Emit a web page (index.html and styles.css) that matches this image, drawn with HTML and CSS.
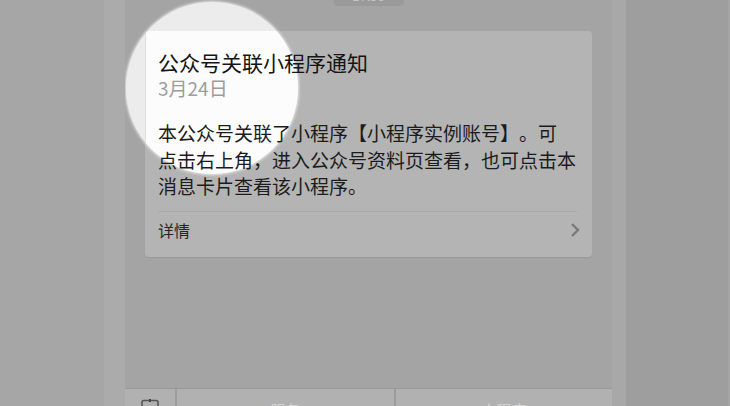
FILE: index.html
```html
<!DOCTYPE html>
<html lang="zh-CN">
<head>
<meta charset="utf-8">
<title>公众号关联小程序通知</title>
<link rel="stylesheet" href="styles.css">
</head>
<body>
<div class="page">
  <div class="gutter-left"></div>
  <div class="strip-left"></div>
  <div class="screen">
    <div class="chat">
      <div class="time"><span class="time-pill">17:58</span></div>
      <div class="card">
        <div class="lens"><div class="lens-card"></div></div>
        <div class="card-body">
          <div class="title">公众号关联小程序通知</div>
          <div class="date">3月24日</div>
          <div class="text">本公众号关联了小程序【小程序实例账号】。可<br>点击右上角，进入公众号资料页查看，也可点击本<br>消息卡片查看该小程序。</div>
        </div>
        <div class="card-foot">
          <span class="detail">详情</span>
          <svg class="chevron" width="10" height="16" viewBox="0 0 10 16"><polyline points="2,2 8,8 2,14" fill="none" stroke="#7a7a7a" stroke-width="2.4"/></svg>
        </div>
      </div>
    </div>
    <div class="menubar">
      <div class="menu-cell menu-icon">
        <svg width="20" height="16" viewBox="0 0 20 16"><rect x="2" y="1.5" width="16" height="13" rx="2" fill="none" stroke="#555" stroke-width="1.6"/><rect x="9" y="0" width="2" height="3" fill="#444"/></svg>
      </div>
      <div class="menu-cell"><span class="menu-text">服务</span></div>
      <div class="menu-cell"><span class="menu-text">小程序</span></div>
    </div>
  </div>
  <div class="strip-right"></div>
  <div class="gutter-right"></div>
</div>
</body>
</html>
```
FILE: styles.css
```css
html, body {
  margin: 0;
  padding: 0;
  height: 406px;
  overflow: hidden;
}
body {
  font-family: "Noto Sans CJK SC", "Noto Sans", sans-serif;
}
.page {
  display: flex;
  height: 406px;
  overflow: hidden;
}
.gutter-left {
  width: 104px;
  background: #a6a6a6;
}
.strip-left {
  width: 21px;
  background: #ababab;
}
.screen {
  width: 487px;
  background: #a4a4a4;
  display: flex;
  flex-direction: column;
}
.strip-right {
  width: 14px;
  background: #a8a8a8;
}
.gutter-right {
  flex: 1;
  background: #9e9e9e;
  border-right: 2px solid #a5a5a5;
}
.chat {
  flex: 1;
  padding: 0 20px;
  overflow: hidden;
}
.time {
  height: 31px;
  display: flex;
  justify-content: center;
}
.time-pill {
  width: 70px;
  height: 20px;
  margin-top: -14px;
  border-radius: 4px;
  background: #9a9a9a;
  color: #c4c4c4;
  font-size: 13px;
  line-height: 20px;
  text-align: center;
}
.card {
  position: relative;
  background: #b4b4b4;
  border-radius: 4px;
  box-shadow: 0 1px 1px rgba(0, 0, 0, 0.06);
  padding-bottom: 9px;
}
.lens {
  position: absolute;
  left: -19px;
  top: -29px;
  width: 172px;
  height: 172px;
  border-radius: 50%;
  background: #ececec;
  overflow: hidden;
  box-shadow: 0 0 3px 1px rgba(255, 255, 255, 0.75);
}
.lens-card {
  position: absolute;
  left: 19px;
  top: 29px;
  width: 300px;
  height: 300px;
  background: #fcfcfc;
  border-left: 1px solid #dedede;
  border-top-left-radius: 4px;
}
.card-body {
  position: relative;
  padding: 17px 15px 0 13px;
}
.title {
  font-size: 21px;
  line-height: 29px;
  color: #151515;
}
.date {
  font-size: 19px;
  line-height: 21px;
  color: #9c9c9c;
}
.text {
  margin-top: 22px;
  font-size: 19px;
  line-height: 26.5px;
  color: #1c1c1c;
  white-space: nowrap;
  text-spacing-trim: space-all;
}
.card-foot {
  position: relative;
  margin: 11px 15px 0 13px;
  border-top: 1px solid #a9a9a9;
  height: 36px;
  display: flex;
  align-items: center;
  justify-content: space-between;
}
.detail {
  font-size: 16px;
  color: #262626;
}
.chevron {
  margin-right: -3px;
}
.menubar {
  height: 17px;
  border-top: 1px solid #999999;
  display: grid;
  grid-template-columns: 50px 1fr 1fr;
  column-gap: 2px;
  background: #9c9c9c;
  overflow: hidden;
}
.menu-cell {
  background: #b1b1b1;
  display: flex;
  justify-content: center;
  padding-top: 11px;
  height: 40px;
}
.menu-icon {
  padding-top: 10px;
}
.menu-text {
  font-size: 15px;
  line-height: 20px;
  color: #d2d2d2;
}
```
